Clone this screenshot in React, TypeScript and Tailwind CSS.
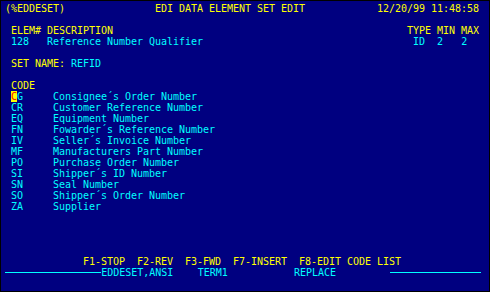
import React from 'react';

type Seg = { col: number; text: string; tone: 'y' | 'c' };

const tones = {
  y: 'text-[#ffff00]',
  c: 'text-[#00ffff]',
};

const codes: Array<[string, string]> = [
  ['CG', 'Consignee´s Order Number'],
  ['CR', 'Customer Reference Number'],
  ['EQ', 'Equipment Number'],
  ['FN', 'Fowarder´s Reference Number'],
  ['IV', 'Seller´s Invoice Number'],
  ['MF', 'Manufacturers Part Number'],
  ['PO', 'Purchase Order Number'],
  ['SI', 'Shipper´s ID Number'],
  ['SN', 'Seal Number'],
  ['SO', 'Shipper´s Order Number'],
  ['ZA', 'Supplier'],
];

// lays text out on the 80 column grid, padding with spaces
function Row({ segs }: { segs: Seg[] }) {
  let pos = 0;
  return (
    <div className="h-[11px] whitespace-pre">
      {segs.map((s, i) => {
        const gap = ' '.repeat(Math.max(0, s.col - pos));
        pos = s.col + s.text.length;
        return (
          <React.Fragment key={i}>
            {gap}
            <span className={tones[s.tone]}>{s.text}</span>
          </React.Fragment>
        );
      })}
    </div>
  );
}

function Blank() {
  return <div className="h-[11px]" />;
}

export default function App() {
  return (
    <div className="w-[490px] h-[292px] bg-black p-px">
      <div
        className="w-full h-full bg-[#000080] pl-[4px] pt-[2px] text-[10px] leading-[11px] tracking-[-0.02px]"
        style={{ fontFamily: '"DejaVu Sans Mono", "Liberation Mono", monospace' }}
      >
        <Row
          segs={[
            { col: 0, text: '(%EDDESET)', tone: 'y' },
            { col: 25, text: 'EDI DATA ELEMENT SET EDIT', tone: 'y' },
            { col: 62, text: '12/20/99 11:48:58', tone: 'y' },
          ]}
        />
        <Blank />
        <Row
          segs={[
            { col: 1, text: 'ELEM# DESCRIPTION', tone: 'y' },
            { col: 67, text: 'TYPE MIN MAX', tone: 'y' },
          ]}
        />
        <Row
          segs={[
            { col: 1, text: '128   Reference Number Qualifier', tone: 'c' },
            { col: 68, text: 'ID', tone: 'c' },
            { col: 72, text: '2', tone: 'c' },
            { col: 76, text: '2', tone: 'c' },
          ]}
        />
        <Blank />
        <Row
          segs={[
            { col: 1, text: 'SET NAME: ', tone: 'y' },
            { col: 11, text: 'REFID', tone: 'c' },
          ]}
        />
        <Blank />
        <Row segs={[{ col: 1, text: 'CODE', tone: 'y' }]} />
        {codes.map(([code, desc], i) => (
          <div key={code} className="h-[11px] whitespace-pre text-[#00ffff]">
            {' '}
            {i === 0 ? (
              <>
                <span className="bg-[#ffff00] text-[#ff0000]">{code[0]}</span>
                {code[1]}
              </>
            ) : (
              code
            )}
            {'     '}
            {desc}
          </div>
        ))}
        <Blank />
        <Blank />
        <Blank />
        <Blank />
        <Row
          segs={[
            {
              col: 13,
              text: 'F1-STOP  F2-REV  F3-FWD  F7-INSERT  F8-EDIT CODE LIST',
              tone: 'y',
            },
          ]}
        />
        <div className="h-[11px] flex items-center whitespace-pre text-[#00ffff]">
          <div className="w-[16ch] h-px bg-[#00ffff]" />
          <span className="w-[16ch]">EDDESET,ANSI</span>
          <span className="w-[16ch]">TERM1</span>
          <span className="w-[16ch]">REPLACE</span>
          <div className="w-[15ch] h-px bg-[#00ffff]" />
        </div>
      </div>
    </div>
  );
}
